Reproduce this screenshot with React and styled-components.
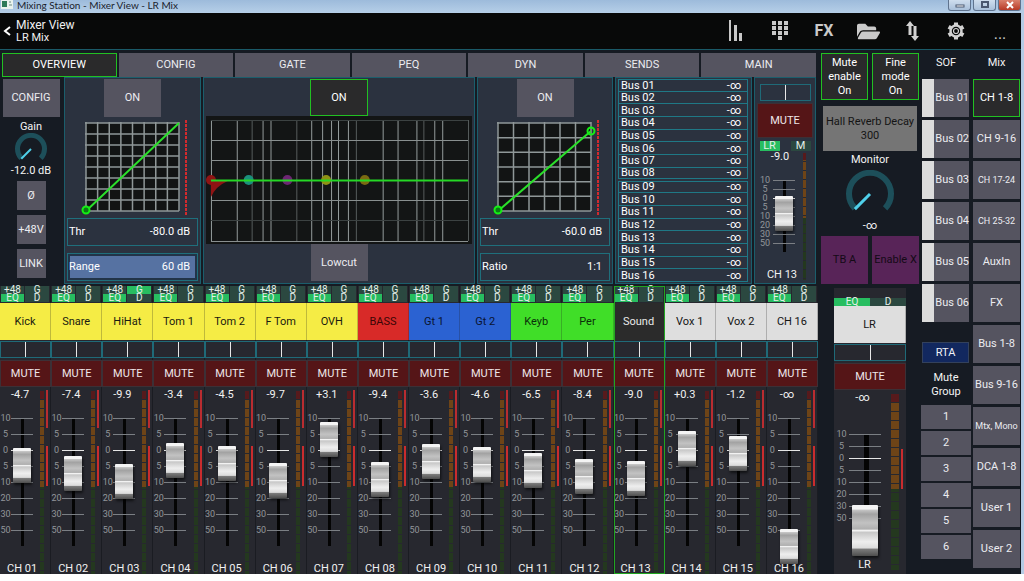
import React from "react";
import styled, { createGlobalStyle, css } from "styled-components";
import { FaFolderOpen } from "react-icons/fa";

const tabs = ["OVERVIEW", "CONFIG", "GATE", "PEQ", "DYN", "SENDS", "MAIN"];

const sends = Array.from({ length: 16 }, (_, i) => `Bus ${String(i + 1).padStart(2, "0")}`);

const channels = [
	{ id: "CH 01", name: "Kick", color: "yellow", db: "-4.7", level: 81 },
	{ id: "CH 02", name: "Snare", color: "yellow", db: "-7.4", level: 73 },
	{ id: "CH 03", name: "HiHat", color: "yellow", db: "-9.9", level: 65, gate: true },
	{ id: "CH 04", name: "Tom 1", color: "yellow", db: "-3.4", level: 86 },
	{ id: "CH 05", name: "Tom 2", color: "yellow", db: "-4.5", level: 83 },
	{ id: "CH 06", name: "F Tom", color: "yellow", db: "-9.7", level: 66 },
	{ id: "CH 07", name: "OVH", color: "yellow", db: "+3.1", level: 107 },
	{ id: "CH 08", name: "BASS", color: "red", db: "-9.4", level: 67 },
	{ id: "CH 09", name: "Gt 1", color: "blue", db: "-3.6", level: 85 },
	{ id: "CH 10", name: "Gt 2", color: "blue", db: "-4.6", level: 82 },
	{ id: "CH 11", name: "Keyb", color: "green", db: "-6.5", level: 76 },
	{ id: "CH 12", name: "Per", color: "green", db: "-8.4", level: 70 },
	{ id: "CH 13", name: "Sound", color: "dark", db: "-9.0", level: 68, selected: true },
	{ id: "CH 14", name: "Vox 1", color: "white", db: "+0.3", level: 98 },
	{ id: "CH 15", name: "Vox 2", color: "white", db: "-1.2", level: 93 },
	{ id: "CH 16", name: "CH 16", color: "white", db: "-∞", level: 0 },
];

const nameColors = {
	yellow: ["#f5ec45", "#1a1a10"],
	red: ["#d82a28", "#3a0606"],
	blue: ["#2b62d2", "#0a1430"],
	green: ["#40de28", "#0a3008"],
	dark: ["#2b2b2b", "#e8e8e8"],
	white: ["#dedede", "#141414"],
};

const sofBuses = ["Bus 01", "Bus 02", "Bus 03", "Bus 04", "Bus 05", "Bus 06"];

const layers = [
	{ name: "CH 1-8", active: true },
	{ name: "CH 9-16" },
	{ name: "CH 17-24", small: true },
	{ name: "CH 25-32", small: true },
	{ name: "AuxIn" },
	{ name: "FX" },
	{ name: "Bus 1-8" },
	{ name: "Bus 9-16" },
	{ name: "Mtx, Mono", small: true },
	{ name: "DCA 1-8" },
	{ name: "User 1" },
	{ name: "User 2" },
];

const scaleMarks = ["10", "5", "0", "5", "10", "20", "30", "50"];

const eqColumns = [5, 31, 46, 57, 65, 91, 106, 117, 126, 133, 143, 151, 178, 193, 212, 219, 230, 238, 264];
const eqFaint = [46, 91, 151, 219, 264];
const eqRows = [4, 24, 44, 84, 104, 125];
const eqBands = [[43, "#1b8f7c"], [82, "#6d2573"], [121, "#8f9114"], [160, "#7b6a12"]];

function Knob({ size, stroke, label }) {
	const c = size / 2;
	const r = c - stroke / 2;
	const d = r * 0.72;
	return (
		<svg width={size} height={size} role="img" aria-label={label}>
			<path
				d={`M${c - d} ${c + d * 0.95}A${r} ${r} 0 1 1 ${c + d} ${c + d * 0.95}`}
				fill="none"
				stroke="#1d4f5a"
				strokeWidth={stroke}
			/>
			<path d={`M${c} ${c}L${c - d} ${c + d}`} stroke="#4fd0ea" strokeWidth={size > 40 ? 3 : 2} />
		</svg>
	);
}

function Gear() {
	return (
		<svg width="18" height="18" viewBox="-9 -9 18 18" fill="none" stroke="#d2d2d2">
			{[0, 60, 120, 180, 240, 300].map((angle) => (
				<path key={angle} d="M0 -5.500V-8.500" strokeWidth="4" transform={`rotate(${angle})`} />
			))}
			<circle r="5.500" strokeWidth="2.500" />
			<circle r="2.500" strokeWidth="1.200" />
		</svg>
	);
}

function Curve({ cells, endY, label }) {
	const lines = Array.from({ length: cells + 1 }, (_, i) => i / cells);
	return (
		<CurveSvg width="112" height="98" role="img" aria-label={label}>
			<rect x="9" y="4" width="93" height="88" fill="#121414" />
			{lines.map((t) => (
				<path
					key={t}
					d={`M${9 + t * 93} 3V92M8 ${4 + t * 88}H102`}
					stroke="#8f9798"
					strokeWidth="1.5"
				/>
			))}
			<path d={`M9 92L102 ${endY}`} stroke="#2be02b" strokeWidth="2" />
			<circle cx="9" cy="91" r="3.5" fill="#0c7a14" stroke="#14f014" strokeWidth="2" />
			{endY > 4 && <circle cx="102" cy={endY} r="3.5" fill="none" stroke="#14f014" strokeWidth="2" />}
			<path d="M109 1V96" stroke="#d22a2e" strokeWidth="2" strokeDasharray="3 1" />
		</CurveSvg>
	);
}

function EqGraph() {
	return (
		<svg width="100%" height="128" viewBox="0 0 268 128" preserveAspectRatio="none" role="img" aria-label="PEQ">
			<rect width="268" height="128" fill="#131515" />
			{eqColumns.map((x) => (
				<path key={x} d={`M${x + 0.5} 4V125`} stroke={eqFaint.includes(x) ? "#565c5c" : "#959c9c"} />
			))}
			{eqRows.map((y) => (
				<path key={y} d={`M5 ${y + 0.5}H264`} stroke={y === 104 || y === 4 ? "#3c4242" : "#8a9090"} />
			))}
			<path d="M5 65H22Q10 70 5 81Z" fill="#8f1414" />
			<circle cx="5" cy="64" r="5" fill="#8f1414" />
			{eqBands.map(([x, color]) => (
				<circle key={x} cx={x} cy="64" r="5" fill={color} />
			))}
			<path d="M5 64.5H264" stroke="#25d825" strokeWidth="2" />
		</svg>
	);
}

function Fader({ label, step, cap, capWidth, inset, tick, level }) {
	return (
		<FaderBox $step={step} $cap={cap} $center={inset + tick / 2}>
			<Scale $step={step} $cap={cap}>
				{scaleMarks.map((mark, i) => (
					<Mark key={i} $step={step} $inset={inset} $tick={tick} $zero={i === 2}>
						<span>{mark}</span>
						<i />
					</Mark>
				))}
			</Scale>
			<FaderInput
				type="range"
				aria-label={`${label} fader`}
				min="0"
				max={step * 8}
				defaultValue={level}
				$cap={cap}
				$width={capWidth}
				$left={inset + tick / 2 - capWidth / 2}
			/>
		</FaderBox>
	);
}

function ChannelStrip({ channel }) {
	const { id, name, color, db, level, gate, selected } = channel;
	return (
		<Strip $selected={selected}>
			<Flags>
				<Flag>+48</Flag>
				<Flag $on={gate}>G</Flag>
				<Flag $on>EQ</Flag>
				<Flag>D</Flag>
			</Flags>
			<Name $color={color}>{name}</Name>
			<Pan type="range" aria-label={`${id} pan`} />
			<Mute>MUTE</Mute>
			<StripBody>
				<FaderColumn>
					<Db>{db}</Db>
					<Fader label={id} step={16} cap={35} capWidth={18} inset={11} tick={22} level={level} />
					<StripLabel>{id}</StripLabel>
				</FaderColumn>
				<Meter $width={4} $red={9} $orange={96} />
				<Clip />
			</StripBody>
		</Strip>
	);
}

function Overview() {
	return (
		<Panels>
			<ConfigColumn>
				<Button $width={57} $height={38}>CONFIG</Button>
				<Caption>Gain</Caption>
				<Knob size={32} stroke={5} label="Gain" />
				<Caption>-12.0 dB</Caption>
				<ConfigButtons>
					<Button $width={29} $height={29}>Ø</Button>
					<Button $width={29} $height={29}>+48V</Button>
					<Button $width={29} $height={29}>LINK</Button>
				</ConfigButtons>
			</ConfigColumn>

			<Panel>
				<Button $width={57} $height={38}>ON</Button>
				<Curve cells={8} endY={4} label="Gate curve" />
				<Fields>
					<Field>Thr<input defaultValue="-80.0 dB" /></Field>
					<Field $filled>Range<input defaultValue="60 dB" /></Field>
				</Fields>
			</Panel>

			<Panel>
				<Button $width={58} $height={37} $active>ON</Button>
				<EqGraph />
				<Button $width={57} $height={37}>Lowcut</Button>
			</Panel>

			<Panel>
				<Button $width={57} $height={38}>ON</Button>
				<Curve cells={6} endY={12} label="Dynamics curve" />
				<Fields>
					<Field>Thr<input defaultValue="-60.0 dB" /></Field>
					<Field>Ratio<input defaultValue="1:1" /></Field>
				</Fields>
			</Panel>

			<Panel>
				<Sends>
					{sends.map((bus) => (
						<Send key={bus}>
							<span>{bus}</span>
							<span>-∞</span>
						</Send>
					))}
				</Sends>
			</Panel>

			<Panel>
				<MainPan type="range" aria-label="Main pan" />
				<MainMute>MUTE</MainMute>
				<MainFlags>
					<Flag $on>LR</Flag>
					<Flag>M</Flag>
				</MainFlags>
				<MainBody>
					<FaderColumn>
						<Db>-9.0</Db>
						<Fader label="Main" step={9} cap={35} capWidth={18} inset={16} tick={22} level={39} />
						<StripLabel>CH 13</StripLabel>
					</FaderColumn>
					<Meter $width={3} $red={7} $orange={65} />
				</MainBody>
			</Panel>
		</Panels>
	);
}

function App() {
	return (
		<Window>
			<GlobalStyle />
			<TitleBar>
				<svg width="12" height="9">
					<rect width="12" height="9" fill="#e8f2ee" />
					<path d="M1 1H6V7H1Z" fill="#2c7a58" />
					<path d="M8 2H10M8 5H11" stroke="#6a8a80" />
				</svg>
				<span>Mixing Station - Mixer View - LR Mix</span>
				<WindowButtons>
					<WindowButton aria-label="Minimize">
						<svg width="10" height="8"><rect x="1" y="4" width="8" height="2" fill="#fff" stroke="#4a5870" /></svg>
					</WindowButton>
					<WindowButton aria-label="Maximize">
						<svg width="10" height="8"><rect x="2" y="1" width="6" height="5" fill="none" stroke="#4a5870" strokeWidth="2" /></svg>
					</WindowButton>
					<WindowButton $close aria-label="Close">
						<svg width="10" height="8"><path d="M2 1L8 7M8 1L2 7" stroke="#fff" strokeWidth="2" /></svg>
					</WindowButton>
				</WindowButtons>
			</TitleBar>

			<Header>
				<Back aria-label="Back">
					<svg width="8" height="10"><path d="M7 1L2 5L7 9" fill="none" stroke="#fff" strokeWidth="2" /></svg>
				</Back>
				<Heading>
					<h1>Mixer View</h1>
					<h2>LR Mix</h2>
				</Heading>
				<Tool aria-label="Meters">
					<svg width="14" height="22" fill="#c8c8c8">
						<rect width="2" height="21" />
						<rect x="5" y="5" width="3" height="16" />
						<rect x="10" y="13" width="3" height="8" />
					</svg>
				</Tool>
				<Tool aria-label="Layers">
					<svg width="16" height="20" fill="#c8c8c8">
						{[0, 5, 10].map((y) => [0, 6, 12].map((x) => <rect key={`${x}-${y}`} x={x} y={y} width="4" height="4" />))}
						<rect x="6" y="15" width="4" height="4" />
					</svg>
				</Tool>
				<Tool>FX</Tool>
				<Tool aria-label="Open">
					<FaFolderOpen size={23} />
				</Tool>
				<Tool aria-label="Routing">
					<svg width="13" height="20" fill="#d2d2d2">
						<path d="M4 0L8 5H5.500V14H2.500V5H0Z" />
						<path d="M9 20L5 15H7.500V5H10.500V15H13Z" />
					</svg>
				</Tool>
				<Tool aria-label="Settings">
					<Gear />
				</Tool>
				<Tool $low aria-label="More">...</Tool>
			</Header>

			<Body>
				<Console>
					<Tabs>
						{tabs.map((tab, i) => (
							<Button key={tab} $height={24} $active={i === 0}>{tab}</Button>
						))}
					</Tabs>
					<Overview />
					<Strips>
						{channels.map((channel) => (
							<ChannelStrip key={channel.id} channel={channel} />
						))}
					</Strips>
				</Console>

				<MonitorColumn>
					<Pair>
						<Button $height={47} $active>Mute<br />enable<br />On</Button>
						<Button $height={47} $active>Fine<br />mode<br />On</Button>
					</Pair>
					<Reverb>Hall Reverb Decay 300</Reverb>
					<Caption>Monitor</Caption>
					<Knob size={48} stroke={6} label="Monitor" />
					<Caption>-∞</Caption>
					<Pair>
						<Button $height={48} $purple>TB A</Button>
						<Button $height={48} $purple>Enable X</Button>
					</Pair>
					<Master>
						<MasterFlags>
							<Flag $on>EQ</Flag>
							<Flag>D</Flag>
						</MasterFlags>
						<Name $color="white">LR</Name>
						<Pan type="range" aria-label="LR pan" />
						<Mute>MUTE</Mute>
						<StripBody>
							<MasterColumn>
								<Db>-∞</Db>
								<Fader label="LR" step={12} cap={51} capWidth={26} inset={15} tick={32} level={0} />
								<StripLabel>LR</StripLabel>
							</MasterColumn>
							<Meter $width={8} $red={8} $orange={95} />
							<Clip $single />
						</StripBody>
					</Master>
				</MonitorColumn>

				<SofColumn>
					<ColumnTitle>SOF</ColumnTitle>
					<ButtonStack>
						{sofBuses.map((bus) => (
							<SofButton key={bus} $height={38}>{bus}</SofButton>
						))}
					</ButtonStack>
					<Rta>RTA</Rta>
					<Caption>Mute Group</Caption>
					<MuteGroups>
						{[1, 2, 3, 4, 5, 6].map((n) => (
							<Button key={n} $height={24}>{n}</Button>
						))}
					</MuteGroups>
				</SofColumn>

				<section>
					<ColumnTitle>Mix</ColumnTitle>
					<ButtonStack>
						{layers.map(({ name, active, small }) => (
							<Button key={name} $height={38} $active={active} $small={small}>
								{name}
							</Button>
						))}
					</ButtonStack>
				</section>
			</Body>
		</Window>
	);
}

export default App;

const GlobalStyle = createGlobalStyle`
	* {
		box-sizing: border-box;
	}

	body {
		margin: 0;
		background-color: #fff;
		color: #f0f0f0;
		font-family: Roboto, "Liberation Sans", sans-serif;
		font-size: 11px;
		line-height: 12px;
	}

	button, input {
		margin: 0;
		padding: 0;
		border: none;
		font: inherit;
		color: inherit;
	}

	svg {
		display: block;
		flex-shrink: 0;
	}
`;

const Window = styled.div`
	border-right: 3px solid #b4cbe4;
	background-color: #161b23;
`;

const TitleBar = styled.div`
	display: flex;
	align-items: flex-start;
	gap: 4px;
	height: 13px;
	padding-left: 1px;
	background: linear-gradient(#9dbbdb, #b6cfe8);
	color: #1a222c;
	font-size: 10px;
	line-height: 10px;
	white-space: nowrap;

	span {
		font-family: Lato, sans-serif;
	}
`;

const WindowButtons = styled.div`
	display: flex;
	gap: 2px;
	margin-left: auto;
`;

const WindowButton = styled.button`
	display: flex;
	align-items: center;
	justify-content: center;
	width: 23px;
	height: 11px;
	border: 1px solid #5f738e;
	border-top: none;
	border-radius: 0 0 3px 3px;
	background: ${({ $close }) => ($close ? "linear-gradient(#d9806c, #b83a26)" : "linear-gradient(#cfdeee, #a9c0da)")};
`;

const Header = styled.header`
	display: flex;
	align-items: center;
	height: 37px;
	border-bottom: 1px solid #1a5a68;
	background-color: #080909;
`;

const Back = styled.button`
	width: 16px;
	padding-left: 3px;
	background: none;
`;

const Heading = styled.div`
	margin-right: auto;

	h1, h2 {
		margin: 0;
		font-size: 12px;
		font-weight: 400;
		line-height: 14px;
	}

	h2 {
		font-size: 11px;
		line-height: 12px;
	}
`;

const Tool = styled.button`
	display: flex;
	align-items: center;
	justify-content: center;
	width: 44px;
	height: 36px;
	padding: ${({ $low }) => ($low ? 6 : 0)}px 0 0 2px;
	background: none;
	color: #cacaca;
	font-size: 16px;
	font-weight: ${({ $low }) => ($low ? 400 : 700)};
`;

const Body = styled.main`
	display: grid;
	grid-template-columns: minmax(0, 1fr) 98px 50px 47px;
	gap: 2px;
	padding: 3px 1px 0 0;
`;

const Console = styled.section`
	display: flex;
	flex-direction: column;
`;

const Button = styled.button`
	display: flex;
	align-items: center;
	justify-content: center;
	flex-shrink: 0;
	width: ${({ $width }) => ($width ? `${$width}px` : "100%")};
	height: ${({ $height }) => $height}px;
	background-color: #555460;
	color: #ececf0;
	font-size: ${({ $small }) => ($small ? 9 : 11)}px;
	line-height: 14px;
	white-space: nowrap;

	${({ $active }) => $active && css`
		border: 1px solid #22c022;
		background-color: #2a2a2b;
		color: #fff;
	`}

	${({ $purple }) => $purple && css`
		background-color: #582458;
		color: #140a16;
	`}
`;

const Tabs = styled.nav`
	display: grid;
	grid-template-columns: repeat(7, 1fr);
	gap: 2px;
	padding: 0 3px 0 2px;
`;

const Panels = styled.div`
	display: grid;
	grid-template-columns: 62px 137px minmax(0, 1fr) 136px 137px 62px;
	gap: 2px;
	height: 207px;
	padding-right: 3px;
`;

const Panel = styled.section`
	display: flex;
	flex-direction: column;
	align-items: center;
	padding: 1px 2px;
	border: 1px solid #1b5e6c;
	background-color: #2b323f;
`;

const ConfigColumn = styled.section`
	display: flex;
	flex-direction: column;
	align-items: center;
	gap: 4px;
	padding-top: 2px;

	svg {
		margin: -4px 0;
	}
`;

const ConfigButtons = styled.div`
	display: grid;
	gap: 5px;
`;

const Caption = styled.div`
	text-align: center;
	color: #f4f4f4;
`;

const CurveSvg = styled.svg`
	margin-top: 2px;
`;

const Fields = styled.div`
	display: grid;
	gap: 7px;
	width: 100%;
	padding-top: 1px;
`;

const Field = styled.label`
	display: flex;
	align-items: center;
	justify-content: space-between;
	height: 28px;
	padding: 0 7px 0 1px;
	border: 1px solid #1f6f7c;
	color: #fff;

	${({ $filled }) => $filled && css`
		background-color: #5672a2;
		box-shadow: inset 0 0 0 2px #223448;
	`}

	input {
		width: 70px;
		background: none;
		text-align: right;
	}
`;

const Sends = styled.div`
	display: grid;
	grid-template-rows: repeat(16, 1fr);
	width: 100%;
	height: 203px;
	padding-right: 1px;
`;

const Send = styled.button`
	display: flex;
	align-items: center;
	justify-content: space-between;
	min-height: 0;
	padding: 1px 6px 0 2px;
	border: 1px solid #1f7886;
	background: none;
	color: #fff;
	line-height: 10px;

	& + & {
		border-top: none;
	}

	&:nth-child(8) {
		margin-bottom: 2px;
	}

	&:nth-child(9) {
		border-top: 1px solid #1f7886;
	}
`;

const Pan = styled.input`
	appearance: none;
	display: block;
	width: 100%;
	height: 17px;
	margin: 1px 0 2px;
	border: 1px solid #1f6a78;
	border-radius: 0;
	background: none;

	&::-webkit-slider-thumb {
		appearance: none;
		width: 1px;
		height: 15px;
		background-color: #e8e8e8;
	}
`;

const MainPan = styled(Pan)`
	width: 51px;
	margin: 5px 0 2px;
`;

const Mute = styled.button`
	width: 100%;
	height: 27px;
	border: 1px solid #3c3036;
	background-color: #551517;
	color: #eee6e8;
`;

const MainMute = styled(Mute)`
	height: 35px;
`;

const Flags = styled.div`
	display: grid;
	grid-template-columns: 23px 1fr;
	gap: 0 1px;
	margin: 0 2px 1px 1px;
`;

const Flag = styled.span`
	height: 8px;
	background-color: ${({ $on }) => ($on ? "#27bd60" : "#2b4840")};
	color: #e4efe8;
	font-size: 10px;
	line-height: 8px;
	text-align: center;
`;

const MainFlags = styled.div`
	display: grid;
	grid-template-columns: 20px 20px;
	justify-content: space-between;
	width: 51px;
	padding-top: 3px;

	span {
		height: 10px;
		font-size: 11px;
		line-height: 10px;
	}
`;

const MasterFlags = styled.div`
	display: grid;
	grid-template-columns: 1fr 1fr;
	padding-top: 10px;
`;

const Strips = styled.div`
	display: grid;
	grid-template-columns: repeat(16, 1fr);
	margin-top: 2px;
	padding-right: 1px;
`;

const Strip = styled.section`
	min-width: 0;
	background-color: #27282f;
	box-shadow: inset -1px 0 0 #1a1c22;
	outline: ${({ $selected }) => ($selected ? "1px solid #21a521" : "none")};
	outline-offset: -1px;
	z-index: ${({ $selected }) => ($selected ? 1 : 0)};
`;

const Name = styled.button`
	display: block;
	width: 100%;
	height: 37px;
	border-right: 1px solid rgba(30, 30, 30, 0.25);
	background-color: ${({ $color }) => nameColors[$color][0]};
	color: ${({ $color }) => nameColors[$color][1]};
`;

const StripBody = styled.div`
	display: flex;
	padding-top: 2px;
`;

const MainBody = styled.div`
	display: flex;
	width: 100%;
	padding-right: 7px;
`;

const FaderColumn = styled.div`
	flex: 1;
	min-width: 0;
`;

const MasterColumn = styled(FaderColumn)`
	& > :first-child {
		margin-bottom: 5px;
	}

	& > :last-child {
		margin-top: 4px;
	}
`;

const Db = styled.output`
	display: block;
	color: #f2f2f2;
	text-align: center;
`;

const StripLabel = styled.div`
	padding-left: 4px;
	color: #f2f2f2;
	line-height: 10px;
	text-align: center;
	white-space: nowrap;
`;

const FaderBox = styled.div`
	display: grid;
	height: ${({ $step, $cap }) => $step * 8 + $cap}px;
	background: linear-gradient(#040404, #040404) no-repeat;
	background-size: ${({ $cap }) => ($cap > 40 ? 5 : 3)}px ${({ $step }) => $step * 8}px;
	background-position: ${({ $center }) => $center - 1}px ${({ $cap }) => ($cap - 1) / 2}px;
`;

const Scale = styled.div`
	grid-area: 1 / 1;
	padding-top: ${({ $step, $cap }) => Math.floor(($cap - $step) / 2)}px;
`;

const Mark = styled.div`
	display: flex;
	align-items: center;
	height: ${({ $step }) => $step}px;
	color: #92969a;
	font-size: 9px;
	line-height: 9px;

	span {
		display: flex;
		justify-content: center;
		width: ${({ $inset }) => $inset}px;
	}

	i {
		width: ${({ $tick }) => $tick}px;
		height: 1px;
		background-color: ${({ $zero }) => ($zero ? "#e6e6e6" : "#7b7f84")};
	}
`;

const FaderInput = styled.input`
	grid-area: 1 / 1;
	appearance: none;
	writing-mode: vertical-lr;
	direction: rtl;
	width: ${({ $width }) => $width}px;
	height: 100%;
	margin-left: ${({ $left }) => $left}px;
	background: none;

	&::-webkit-slider-thumb {
		appearance: none;
		width: ${({ $width }) => $width}px;
		height: ${({ $cap }) => $cap}px;
		border-radius: 1px;
		background: linear-gradient(
			#f4f4f4 0 8%,
			#c4c4c4 10%,
			#a2a2a2 18%,
			#c2c2c2 35%,
			#b0b0b0 47%,
			#f2f2f2 50%,
			#c8c8c8 54%,
			#eeeeee 72%,
			#dcdcdc 84%,
			#7a7a7a 87%,
			#4e4e4e 100%
		);
		box-shadow: 1px 2px 3px rgba(0, 0, 0, 0.6);
	}
`;

const Meter = styled.div`
	width: ${({ $width }) => $width}px;
	margin-top: 2px;
	background:
		repeating-linear-gradient(transparent 0 8px, #27282f 8px 9px),
		linear-gradient(
			#571a1c 0 ${({ $red }) => $red}px,
			#6e4417 ${({ $red }) => $red}px ${({ $orange }) => $orange}px,
			#24381f ${({ $orange }) => $orange}px
		);
`;

const Clip = styled.div`
	width: 2px;
	height: 96px;
	margin: 1px 3px 0 2px;
	background: linear-gradient(
		${({ $single }) => ($single ? "transparent" : "#b92c30")} 0 38px,
		transparent 38px 56px,
		#c92c2e 56px
	);
`;

const MonitorColumn = styled.section`
	display: flex;
	flex-direction: column;
	align-items: center;

	& > svg {
		margin: 4px 0 2px;
	}
`;

const Pair = styled.div`
	display: grid;
	grid-template-columns: 1fr 1fr;
	gap: 4px;
	width: 100%;

	& ~ & {
		margin-top: 4px;
	}
`;

const Reverb = styled.button`
	width: 94px;
	height: 45px;
	margin: 6px 0 3px;
	background-color: #757575;
	color: #141414;
	line-height: 14px;
`;

const Master = styled.section`
	display: flex;
	flex: 1;
	flex-direction: column;
	width: 72px;
	margin-top: 4px;
	background-color: #27282f;
`;

const ColumnTitle = styled.div`
	height: 26px;
	padding-top: 4px;
	color: #f4f4f4;
	text-align: center;
`;

const ButtonStack = styled.div`
	display: grid;
	gap: 3px;
`;

const SofColumn = styled.section`
	${Caption} {
		padding: 8px 8px 6px;
		line-height: 14px;
	}
`;

const SofButton = styled(Button)`
	justify-content: flex-end;
	width: 47px;
	margin-left: 1px;
	border-left: 12px solid #dcdcdc;
`;

const Rta = styled.button`
	width: 47px;
	height: 21px;
	margin: 20px 0 0 1px;
	border: 1px solid #33415c;
	background-color: #12285f;
	color: #f0f2f8;
`;

const MuteGroups = styled.div`
	display: grid;
	gap: 2px;
`;
